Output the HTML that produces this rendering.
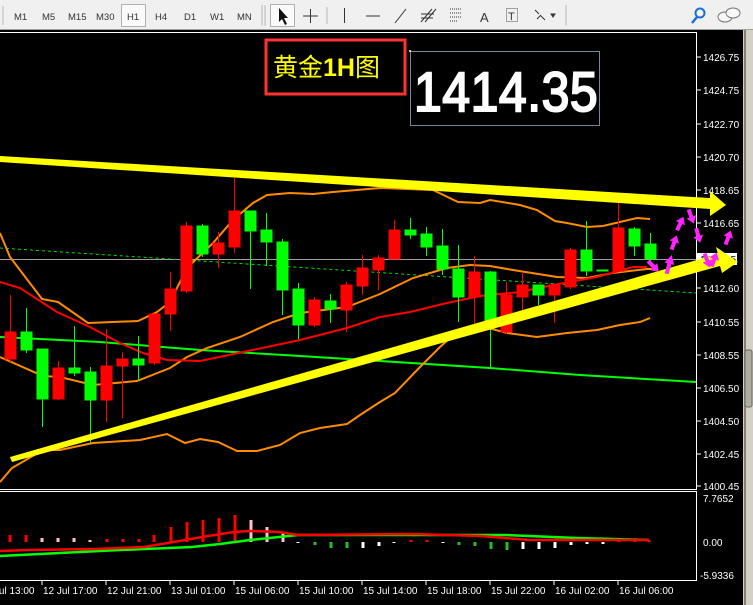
<!DOCTYPE html>
<html><head><meta charset="utf-8"><style>
html,body{margin:0;padding:0;width:753px;height:605px;overflow:hidden;background:#000}
svg{display:block}
text{font-family:"Liberation Sans",sans-serif}
</style></head><body>
<svg width="753" height="605" viewBox="0 0 753 605" xmlns="http://www.w3.org/2000/svg">
<!-- toolbar -->
<rect x="0" y="0" width="753" height="30" fill="#f0f0f0"/>
<line x1="0" y1="29.5" x2="753" y2="29.5" stroke="#a0a0a0"/>
<g stroke="#b8b8b8"><line x1="3" y1="6" x2="3" y2="25"/><line x1="262" y1="5" x2="262" y2="26"/><line x1="265" y1="5" x2="265" y2="26"/><line x1="327" y1="7" x2="327" y2="24"/><line x1="566" y1="5" x2="566" y2="26"/></g>
<rect x="121.5" y="4.5" width="24" height="22" fill="#fafafa" stroke="#b0b0b0"/>
<rect x="270.5" y="4.5" width="24" height="22" fill="#fafafa" stroke="#b0b0b0"/>
<g font-size="9.5" fill="#333">
<text x="14" y="20">M1</text><text x="42" y="20">M5</text><text x="68" y="20">M15</text><text x="96" y="20">M30</text><text x="127" y="20">H1</text><text x="155" y="20">H4</text><text x="184" y="20">D1</text><text x="210" y="20">W1</text><text x="237" y="20">MN</text>
</g>
<path d="M279 8 L279 22 L282 19 L285 25 L287 24 L284 18 L288 18 Z" fill="#111"/>
<g stroke="#333" stroke-width="1"><line x1="303" y1="16" x2="318" y2="16"/><line x1="310.5" y1="9" x2="310.5" y2="23"/>
<line x1="344.5" y1="8" x2="344.5" y2="23"/><line x1="366" y1="16" x2="380" y2="16"/><line x1="395" y1="23" x2="406" y2="9"/>
<path d="M421 22 L432 9 M425 22 L436 9 M421 14 H434 M421 18 H433"/>
<path d="M450 9 H462 M450 13 H462 M450 17 H462 M450 21 H458" stroke-dasharray="1,1"/>
</g>
<text x="480" y="22" font-size="13" fill="#333">A</text>
<rect x="506.5" y="8.5" width="11" height="13" fill="none" stroke="#555" stroke-dasharray="1,1"/><text x="508" y="20" font-size="11" fill="#333">T</text>
<path d="M535 10 l4 4 M541 16 l4 4 M537 19 l4 -4 M551 14 l4 0 l-2 3z" stroke="#333" fill="#333"/>
<circle cx="700" cy="13" r="4.5" fill="none" stroke="#1a6fd0" stroke-width="2"/><line x1="697" y1="17" x2="692" y2="23" stroke="#1a6fd0" stroke-width="2.5"/>
<ellipse cx="725" cy="17" rx="7" ry="5" fill="#f8f8f8" stroke="#777"/><ellipse cx="733" cy="13" rx="7" ry="5" fill="#f8f8f8" stroke="#777"/>
<!-- right scrollbar -->
<rect x="743" y="30" width="10" height="575" fill="#d4d0c8"/>
<rect x="744" y="30" width="2" height="575" fill="#8a8070"/>
<rect x="745" y="350" width="7" height="57" rx="2" fill="#b0aca0" stroke="#666"/>
<!-- frames -->
<rect x="0" y="30" width="743" height="575" fill="#000"/>
<path d="M0 32.5 H696.5 V489.5 H0" fill="none" stroke="#fff"/>
<path d="M0 491.5 H696.5 V580.5 H0" fill="none" stroke="#fff"/>
<!-- price axis -->
<g font-size="10" fill="#fff">
<text x="703" y="61">1426.75</text><text x="703" y="94">1424.75</text><text x="703" y="128">1422.70</text><text x="703" y="161">1420.70</text><text x="703" y="194">1418.65</text><text x="703" y="227">1416.65</text><text x="703" y="292">1412.60</text><text x="703" y="326">1410.55</text><text x="703" y="359">1408.55</text><text x="703" y="392">1406.50</text><text x="703" y="425">1404.50</text><text x="703" y="458">1402.45</text><text x="703" y="490">1400.45</text>
<text x="703" y="502">7.7652</text><text x="703" y="546">0.00</text><text x="700" y="579">-5.9336</text>
</g>
<g stroke="#fff"><path d="M697 57h4M697 90h4M697 124h4M697 157h4M697 190h4M697 223h4M697 288h4M697 322h4M697 355h4M697 388h4M697 421h4M697 454h4M697 486h4"/></g>
<rect x="697" y="253" width="40" height="12" fill="#fff"/><text x="700" y="263" font-size="10" fill="#000">1414.35</text>
<!-- time axis -->
<g font-size="10" fill="#fff"><text x="-20" y="594">12 Jul 13:00</text><text x="43" y="594">12 Jul 17:00</text><text x="107" y="594">12 Jul 21:00</text><text x="171" y="594">13 Jul 01:00</text><text x="235" y="594">15 Jul 06:00</text><text x="299" y="594">15 Jul 10:00</text><text x="363" y="594">15 Jul 14:00</text><text x="427" y="594">15 Jul 18:00</text><text x="491" y="594">15 Jul 22:00</text><text x="555" y="594">16 Jul 02:00</text><text x="619" y="594">16 Jul 06:00</text></g>
<g stroke="#fff"><path d="M42 581v4M106 581v4M170 581v4M234 581v4M298 581v4M362 581v4M426 581v4M490 581v4M554 581v4M618 581v4"/></g>
<!-- gray current line, dashed green -->
<line x1="0" y1="259.5" x2="696" y2="259.5" stroke="#a0a0a0"/>
<line x1="0" y1="248" x2="696" y2="293" stroke="#00e000" stroke-dasharray="3,3"/>
<!-- long green MA -->
<polyline fill="none" stroke="#00ff00" stroke-width="2" points="0,337 100,342 200,350 300,356 380,361 490,368 580,375 696,382"/>
<line x1="0" y1="157" x2="235" y2="176" stroke="#00ff00" stroke-width="2"/>
<!-- Bollinger -->
<g fill="none" stroke="#ff8c00" stroke-width="2">
<polyline points="0,233 10,257 42,299 58,302 88,323 138,321 157,312 170,302 187,268 213,243 233,220 253,203 267,195 290,193 313,194 333,192 380,188 433,190 458,202 480,203 490,200 520,205 537,210 555,221 567,223 587,227 603,226 620,222 637,218 650,219"/>
<polyline points="0,357 43,376 60,377 93,385 137,381 170,368 187,357 207,348 240,337 273,322 300,313 347,307 380,294 413,278 447,268 470,265 490,266 513,270 557,277 587,278 613,273 647,269 657,269"/>
<polyline points="0,482 12,468 43,450 60,450 93,443 140,440 167,434 185,443 200,439 218,442 237,451 257,451 280,445 300,433 320,428 347,424 360,415 380,402 395,393 420,367 440,347 458,331 477,325 507,333 537,337 567,333 597,330 620,325 640,322 650,318"/>
</g>
<polyline fill="none" stroke="#ff0000" stroke-width="2" points="0,282 20,288 57,312 90,327 120,343 143,353 167,360 200,361 253,350 300,340 347,328 380,317 410,312 447,303 480,296 520,292 553,285 597,277 633,267 647,267"/>
<!-- candles -->
<g stroke="#ff0000" fill="#ff0000">
<line x1="10.5" y1="295" x2="10.5" y2="362"/><rect x="5" y="332" width="11" height="27"/>
<line x1="58.5" y1="361" x2="58.5" y2="400"/><rect x="53" y="368" width="11" height="31"/>
<line x1="106.5" y1="329" x2="106.5" y2="422"/><rect x="101" y="366" width="11" height="34"/>
<line x1="122.5" y1="352" x2="122.5" y2="418"/><rect x="117" y="359" width="11" height="7"/>
<line x1="154.5" y1="314" x2="154.5" y2="365"/><rect x="149" y="314" width="11" height="49"/>
<line x1="170.5" y1="272" x2="170.5" y2="331"/><rect x="165" y="289" width="11" height="25"/>
<line x1="186.5" y1="222" x2="186.5" y2="293"/><rect x="181" y="226" width="11" height="65"/>
<line x1="218.5" y1="232" x2="218.5" y2="268"/><rect x="213" y="243" width="11" height="11"/>
<line x1="234.5" y1="176" x2="234.5" y2="253"/><rect x="229" y="211" width="11" height="36"/>
<line x1="314.5" y1="297" x2="314.5" y2="327"/><rect x="309" y="300" width="11" height="25"/>
<line x1="346.5" y1="282" x2="346.5" y2="332"/><rect x="341" y="285" width="11" height="25"/>
<line x1="362.5" y1="255" x2="362.5" y2="295"/><rect x="357" y="268" width="11" height="18"/>
<line x1="378.5" y1="255" x2="378.5" y2="290"/><rect x="373" y="258" width="11" height="12"/>
<line x1="394.5" y1="220" x2="394.5" y2="259"/><rect x="389" y="230" width="11" height="29"/>
<line x1="474.5" y1="256" x2="474.5" y2="325"/><rect x="469" y="272" width="11" height="25"/>
<line x1="506.5" y1="282" x2="506.5" y2="334"/><rect x="501" y="295" width="11" height="37"/>
<line x1="522.5" y1="272" x2="522.5" y2="316"/><rect x="517" y="285" width="11" height="12"/>
<line x1="554.5" y1="285" x2="554.5" y2="323"/><rect x="549" y="285" width="11" height="10"/>
<line x1="570.5" y1="248" x2="570.5" y2="289"/><rect x="565" y="250" width="11" height="37"/>
<line x1="618.5" y1="202" x2="618.5" y2="272"/><rect x="613" y="228" width="11" height="43"/>
</g>
<g stroke="#00ff00" fill="#00ff00">
<line x1="26.5" y1="308" x2="26.5" y2="353"/><rect x="21" y="332" width="11" height="18"/>
<line x1="42.5" y1="349" x2="42.5" y2="427"/><rect x="37" y="349" width="11" height="50"/>
<line x1="74.5" y1="326" x2="74.5" y2="376"/><rect x="69" y="368" width="11" height="5"/>
<line x1="90.5" y1="367" x2="90.5" y2="443"/><rect x="85" y="372" width="11" height="28"/>
<line x1="138.5" y1="336" x2="138.5" y2="380"/><rect x="133" y="359" width="11" height="6"/>
<line x1="202.5" y1="224" x2="202.5" y2="257"/><rect x="197" y="226" width="11" height="28"/>
<line x1="250.5" y1="211" x2="250.5" y2="289"/><rect x="245" y="211" width="11" height="20"/>
<line x1="266.5" y1="213" x2="266.5" y2="266"/><rect x="261" y="230" width="11" height="12"/>
<line x1="282.5" y1="239" x2="282.5" y2="315"/><rect x="277" y="242" width="11" height="48"/>
<line x1="298.5" y1="283" x2="298.5" y2="339"/><rect x="293" y="289" width="11" height="36"/>
<line x1="330.5" y1="294" x2="330.5" y2="323"/><rect x="325" y="301" width="11" height="8"/>
<line x1="410.5" y1="218" x2="410.5" y2="239"/><rect x="405" y="230" width="11" height="5"/>
<line x1="426.5" y1="227" x2="426.5" y2="256"/><rect x="421" y="234" width="11" height="13"/>
<line x1="442.5" y1="229" x2="442.5" y2="275"/><rect x="437" y="246" width="11" height="23"/>
<line x1="458.5" y1="245" x2="458.5" y2="322"/><rect x="453" y="269" width="11" height="28"/>
<line x1="490.5" y1="271" x2="490.5" y2="369"/><rect x="485" y="272" width="11" height="52"/>
<line x1="538.5" y1="285" x2="538.5" y2="305"/><rect x="533" y="285" width="11" height="10"/>
<line x1="586.5" y1="221" x2="586.5" y2="276"/><rect x="581" y="250" width="11" height="21"/>
<rect x="597" y="270" width="11" height="1"/>
<line x1="634.5" y1="227" x2="634.5" y2="256"/><rect x="629" y="229" width="11" height="17"/>
<line x1="650.5" y1="233" x2="650.5" y2="263"/><rect x="645" y="244" width="11" height="15"/>
</g>
<!-- yellow trend arrows -->
<polygon points="0,156 710,198 710,191 726,205 710,216 710,209 0,162" fill="#ffff00"/>
<polygon points="10,457 718,254 716,247 738,262 722,273 720,266 12,462" fill="#ffff00"/>
<!-- magenta arrows -->
<g fill="#ff22ff">
<polygon points="0,-8 5,-1 2,-1 2,7 -2,7 -2,-1 -5,-1" transform="translate(653,266) rotate(135)"/>
<polygon points="0,-8 5,-1 2,-1 2,7 -2,7 -2,-1 -5,-1" transform="translate(669,265) rotate(15) scale(1,1.3)"/>
<polygon points="0,-8 5,-1 2,-1 2,7 -2,7 -2,-1 -5,-1" transform="translate(674,243) rotate(20)"/>
<polygon points="0,-8 5,-1 2,-1 2,7 -2,7 -2,-1 -5,-1" transform="translate(680,224) rotate(25)"/>
<polygon points="0,-8 5,-1 2,-1 2,7 -2,7 -2,-1 -5,-1" transform="translate(691,216) rotate(160)"/>
<polygon points="0,-8 5,-1 2,-1 2,7 -2,7 -2,-1 -5,-1" transform="translate(698,235) rotate(165)"/>
<polygon points="0,-8 5,-1 2,-1 2,7 -2,7 -2,-1 -5,-1" transform="translate(707,260) rotate(160)"/>
<polygon points="0,-8 5,-1 2,-1 2,7 -2,7 -2,-1 -5,-1" transform="translate(714,260) rotate(20)"/>
<polygon points="0,-8 5,-1 2,-1 2,7 -2,7 -2,-1 -5,-1" transform="translate(728,238) rotate(20)"/>
</g>
<!-- title boxes -->
<rect x="266" y="40" width="139" height="54" fill="#000" stroke="#ff3333" stroke-width="3"/>
<text x="273" y="76" font-size="25" fill="#ffff00" style="font-family:'Liberation Sans','Noto Sans CJK SC',sans-serif">黄金<tspan font-weight="bold">1H</tspan>图</text>
<rect x="410.5" y="51.5" width="189" height="74" fill="#000" stroke="#778899"/>
<circle cx="410" cy="51" r="1" fill="#fff"/>
<text x="414" y="111" font-size="50" fill="#fff" stroke="#fff" stroke-width="1.8" transform="translate(414,111) scale(1,1.12) translate(-414,-111)" letter-spacing="0.5">1414.35</text>
<!-- subwindow histogram -->
<g stroke-width="3">
<path stroke="#ff0000" d="M10 535v7M26 535v7M107 539v3M123 539v3M139 539v3M154 535v7M171 527v15M187 522v20M203 520v22M219 518v24M235 515v27M411 540v2M427 540v2M619 540v2M635 540v2M649 540v2"/>
<path stroke="#ffc0cb" d="M42 538v4M58 538v4M74 538v4M90 540v2M251 520v22M267 527v15M283 533v9"/>
<path stroke="#22c022" d="M315 542v3M331 542v6M347 542v6M459 542v3M475 542v4M491 542v7M507 542v8"/>
<path stroke="#ffffff" d="M298 542v1M363 542v6M379 542v4M394 542v1M443 542v1M523 542v7M539 542v7M555 542v6M571 542v3M587 542v2M603 542v2"/>
</g>
<polyline fill="none" stroke="#00ff00" stroke-width="2.5" points="0,556 60,553 120,550 192,547 220,544 250,540 298,535 505,535 577,538 649,540"/>
<polyline fill="none" stroke="#ff0000" stroke-width="2.5" points="0,551 29,550 96,549 144,547 168,543 202,537 234,532 250,531 279,532 298,535 413,534 481,536 529,540 649,540"/>
</svg>
</body></html>
